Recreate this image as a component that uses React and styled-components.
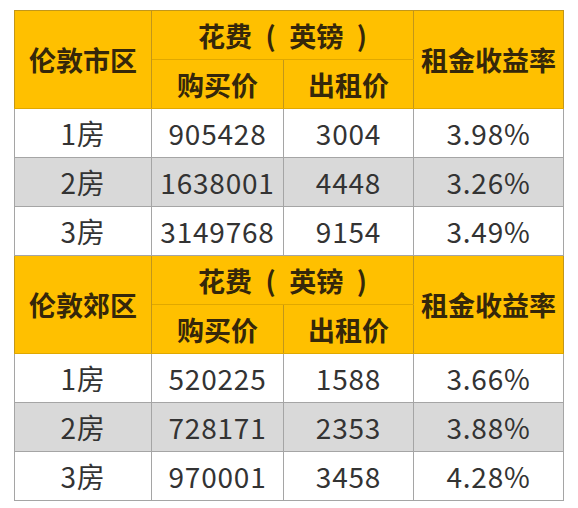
import React from "react";
import styled, { createGlobalStyle } from "styled-components";

const GlobalStyle = createGlobalStyle`
  html, body {
    margin: 0;
    padding: 0;
    background: #ffffff;
  }
  body {
    font-family: "Noto Sans CJK SC", "Noto Sans", sans-serif;
  }
`;

const Page = styled.div`
  padding: 10px 0 0 14px;
`;

const Table = styled.table`
  border-collapse: collapse;
  table-layout: fixed;
  width: 550px;
`;

const HeadCell = styled.th`
  height: ${(p) => (p.rowSpan > 1 ? 97 : 48)}px;
  padding: 0;
  background: #ffc000;
  color: #35270a;
  font-size: 27px;
  font-weight: 700;
  text-align: center;
  vertical-align: middle;
  border: 1px solid #c2961a;
  border-bottom-color: #e0a800;
  line-height: 1;
  white-space: pre;
`;

const Row = styled.tr`
  background: ${(p) => (p.$shaded ? "#d9d9d9" : "#ffffff")};
`;

const Cell = styled.td`
  height: 48px;
  padding: 0;
  color: #333333;
  font-size: 28px;
  letter-spacing: 0.8px;
  text-align: center;
  vertical-align: middle;
  border: 1px solid #a5a5a5;
  line-height: 1;
`;

const sections = [
  {
    area: "伦敦市区",
    rows: [
      ["1房", "905428", "3004", "3.98%"],
      ["2房", "1638001", "4448", "3.26%"],
      ["3房", "3149768", "9154", "3.49%"],
    ],
  },
  {
    area: "伦敦郊区",
    rows: [
      ["1房", "520225", "1588", "3.66%"],
      ["2房", "728171", "2353", "3.88%"],
      ["3房", "970001", "3458", "4.28%"],
    ],
  },
];

const Section = ({ area, rows }) => (
  <tbody>
    <tr>
      <HeadCell rowSpan={2}>{area}</HeadCell>
      <HeadCell colSpan={2}>{"花费\u2002(\u2002英镑\u2002)"}</HeadCell>
      <HeadCell rowSpan={2}>租金收益率</HeadCell>
    </tr>
    <tr>
      <HeadCell>购买价</HeadCell>
      <HeadCell>出租价</HeadCell>
    </tr>
    {rows.map((r, i) => (
      <Row key={r[0]} $shaded={i === 1}>
        {r.map((v, j) => (
          <Cell key={j}>{v}</Cell>
        ))}
      </Row>
    ))}
  </tbody>
);

export default function App() {
  return (
    <Page>
      <GlobalStyle />
      <Table>
        <colgroup>
          <col style={{ width: 137 }} />
          <col style={{ width: 132 }} />
          <col style={{ width: 130 }} />
          <col style={{ width: 150 }} />
        </colgroup>
        {sections.map((s) => (
          <Section key={s.area} {...s} />
        ))}
      </Table>
    </Page>
  );
}
